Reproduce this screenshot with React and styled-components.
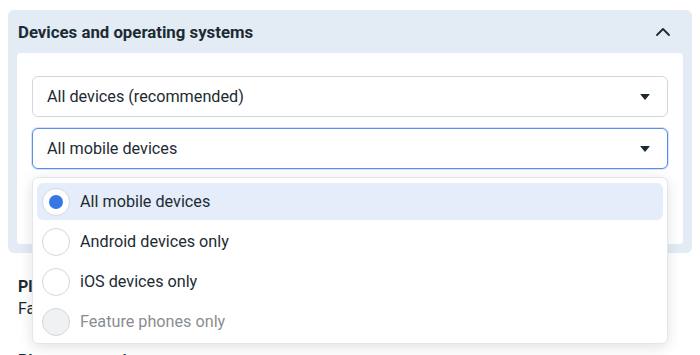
import React from "react";
import styled, { createGlobalStyle } from "styled-components";

const GlobalStyle = createGlobalStyle`
  body {
    margin: 0;
    background: #ffffff;
    font-family: Roboto, "Liberation Sans", Arial, sans-serif;
    color: #1c2b33;
  }
`;

const options = [
  { label: "All mobile devices", selected: true },
  { label: "Android devices only" },
  { label: "iOS devices only" },
  { label: "Feature phones only", disabled: true },
];

const App = () => {
  return (
    <Page>
      <GlobalStyle />
      <Panel>
        <PanelHeader>
          <Title>Devices and operating systems</Title>
          <Chevron viewBox="0 0 16 16">
            <path d="M2 11 L8 5 L14 11" fill="none" stroke="#1c2b33" strokeWidth="1.8" strokeLinecap="round" strokeLinejoin="round" />
          </Chevron>
        </PanelHeader>
        <Card>
          <Select>
            <span>All devices (recommended)</span>
            <Caret />
          </Select>
          <SelectWrap>
            <Select focused>
              <span>All mobile devices</span>
              <Caret />
            </Select>
            <Menu>
              {options.map((o) => (
                <Option key={o.label} active={o.selected} disabled={o.disabled}>
                  <Radio checked={o.selected} disabled={o.disabled} />
                  <span>{o.label}</span>
                </Option>
              ))}
            </Menu>
          </SelectWrap>
        </Card>
      </Panel>
      <Section>
        <SectionTitle>Placements</SectionTitle>
        <SectionText>Facebook, Instagram, Audience Network and Messenger</SectionText>
      </Section>
      <Section last>
        <SectionTitle>Placement options</SectionTitle>
      </Section>
    </Page>
  );
};

const Page = styled.div`
  padding: 10px 8px 0;
  height: 355px;
  box-sizing: border-box;
  overflow: hidden;
`;

const Panel = styled.div`
  background: #e3ecf5;
  border-radius: 6px;
  padding: 0 9px 9px;
`;

const PanelHeader = styled.div`
  height: 43px;
  display: flex;
  align-items: center;
  justify-content: space-between;
  padding: 0 12px 0 1px;
`;

const Title = styled.h3`
  margin: 0;
  font-size: 16.8px;
  font-weight: 700;
  color: #1c2b33;
`;

const Chevron = styled.svg`
  width: 16px;
  height: 16px;
`;

const Card = styled.div`
  background: #ffffff;
  border-radius: 4px;
  padding: 23px 15px 75px;
  display: flex;
  flex-direction: column;
  gap: 11px;
`;

const SelectWrap = styled.div`
  position: relative;
`;

const Select = styled.div`
  height: 41px;
  box-sizing: border-box;
  border: 1px solid ${(p) => (p.focused ? "#5b8def" : "#d4d7db")};
  box-shadow: ${(p) => (p.focused ? "0 0 0 1px rgba(91,141,239,0.25)" : "none")};
  border-radius: 6px;
  padding: 0 17px 0 14px;
  display: flex;
  align-items: center;
  justify-content: space-between;
  font-size: 16.2px;
  color: #1c2b33;
  background: #ffffff;
`;

const Caret = styled.span`
  width: 0;
  height: 0;
  border-left: 5.5px solid transparent;
  border-right: 5.5px solid transparent;
  border-top: 6px solid #1c2b33;
  border-radius: 1px;
`;

const Menu = styled.div`
  position: absolute;
  top: 49px;
  left: 0;
  right: 0;
  background: #ffffff;
  border-radius: 6px;
  border: 1px solid #e4e6e9;
  box-shadow: 0 3px 14px rgba(0, 0, 0, 0.12);
  padding: 5px 4px 3px;
  display: flex;
  flex-direction: column;
  gap: 3px;
`;

const Option = styled.div`
  height: 37px;
  display: flex;
  align-items: center;
  gap: 10px;
  padding: 0 5px;
  border-radius: 6px;
  background: ${(p) => (p.active ? "#e5ecfa" : "transparent")};
  font-size: 16.2px;
  color: ${(p) => (p.disabled ? "#8a8d91" : "#1c2b33")};
`;

const Radio = styled.span`
  width: 28px;
  height: 28px;
  box-sizing: border-box;
  border-radius: 50%;
  border: 1px solid #d4d7db;
  background: ${(p) => (p.disabled ? "#f0f1f2" : "#ffffff")};
  display: flex;
  align-items: center;
  justify-content: center;
  flex-shrink: 0;
  &::after {
    content: "";
    display: ${(p) => (p.checked ? "block" : "none")};
    width: 14px;
    height: 14px;
    border-radius: 50%;
    background: #3578e5;
  }
`;

const Section = styled.div`
  padding: ${(p) => (p.last ? "30px" : "23px")} 10px 0;
`;

const SectionTitle = styled.div`
  font-size: 16px;
  font-weight: 700;
  line-height: 22px;
`;

const SectionText = styled.div`
  font-size: 16px;
  line-height: 22px;
`;

export default App;
